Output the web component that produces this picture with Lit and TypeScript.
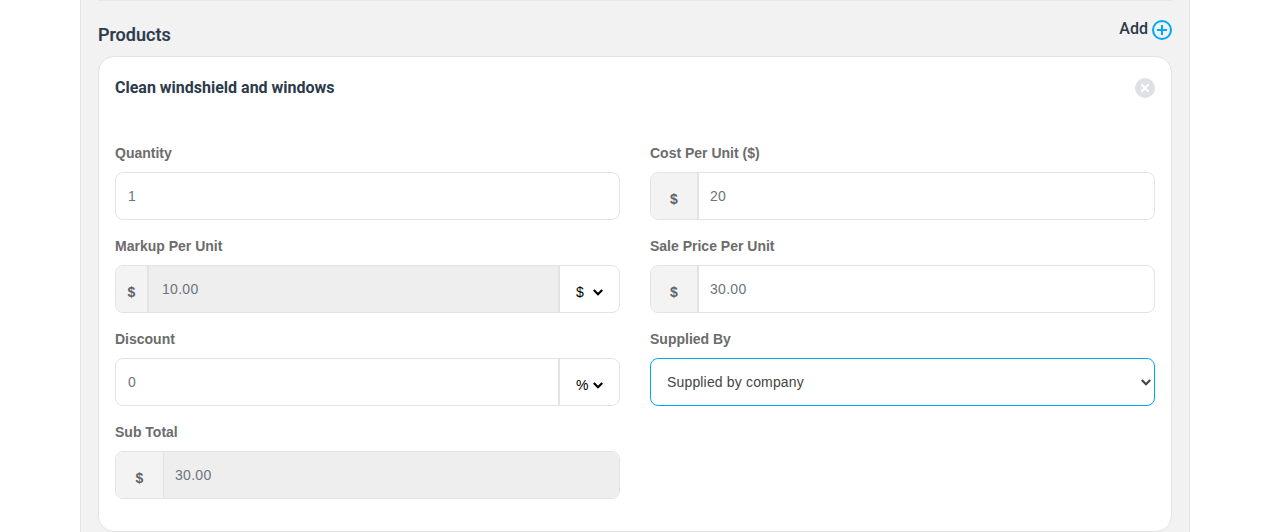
import { LitElement, html, css, svg } from "lit";
import { customElement } from "lit/decorators.js";

const chevron = (color = "#000") => html`<svg class="chev" width="12" height="12" viewBox="0 0 12 12" aria-hidden="true">${svg`<path d="M1.8 4l4.2 4.2L10.2 4" fill="none" stroke=${color} stroke-width="2.2"/>`}</svg>`;

@customElement("app-root")
export class AppRoot extends LitElement {
  static styles = css`
    :host { display: block; height: 532px; overflow: hidden; background: #fff; font-family: "Liberation Sans", Arial, sans-serif; }
    * { box-sizing: border-box; }
    .panel { width: 1110px; height: 532px; margin-left: 80px; background: #f2f2f2; border-left: 1px solid #e3e3e3; border-right: 1px solid #e3e3e3; padding: 0 17px; }
    .rule { height: 1px; background: #e5e7eb; }
    .head { display: flex; justify-content: space-between; height: 55px; }
    .title { font: 500 18px/22px Roboto, sans-serif; color: #2c3a4b; margin: 0; padding-top: 23px; -webkit-text-stroke: 0.2px #2c3a4b; }
    .add { display: flex; align-items: flex-start; gap: 3px; font: 500 16px/20px Roboto, sans-serif; color: #2c3a4b; padding-top: 18px; }
    .add svg { margin-top: 1px; }
    .card { background: #fff; border: 1px solid #e3e3e3; border-radius: 16px; height: 476px; padding: 0 16px; }
    .card-head { display: flex; justify-content: space-between; align-items: center; height: 61px; padding-top: 1px; }
    .card-title { font: 700 16px/20px Roboto, sans-serif; color: #2c3a4b; margin: 0; }
    .grid { display: grid; grid-template-columns: 505px 505px; column-gap: 30px; row-gap: 0; padding-top: 25px; }
    .field { height: 93px; }
    label { display: block; font: 700 14px/20px "Liberation Sans", Arial, sans-serif; color: #6c6c6c; height: 20px; margin-bottom: 9px; }
    .group { display: flex; height: 48px; border: 1px solid #e3e3e3; border-radius: 8px; overflow: hidden; background: #fff; }
    .addon { flex: none; display: flex; align-items: center; justify-content: center; background: #f3f3f3; border-right: 2px solid #e3e3e3; font: 700 14px "Liberation Sans", Arial, sans-serif; color: #5f6368; padding-top: 6px; }
    .w33 { width: 33px; }
    .w48 { width: 48px; }
    .thin { border-right-width: 1px; }
    .value { flex: 1; min-width: 0; padding: 0 11px; font: 14px/46px "Liberation Sans", Arial, sans-serif; letter-spacing: 0.3px; color: #6c757d; }
    .value.plain { padding-left: 12px; }
    .value.off { background: #eee; padding-left: 13px; }
    .value.off.tight { padding-left: 11px; }
    .unit { flex: none; width: 61px; border-left: 2px solid #e3e3e3; display: flex; align-items: center; padding: 6px 0 0 16px; font: 14px "Liberation Sans", Arial, sans-serif; color: #000; }
    .unit span { width: 16px; }
    .chev { flex: none; }
    .select { height: 48px; border: 1px solid #00a8f5; border-radius: 8px; display: flex; align-items: center; justify-content: space-between; padding: 0 2px 0 16px; font: 14px "Liberation Sans", Arial, sans-serif; letter-spacing: 0.16px; color: #444; }
  `;

  render() {
    return html`<div class="panel">
      <div class="rule"></div>
      <div class="head">
        <h2 class="title">Products</h2>
        <div class="add">Add
          <svg width="21" height="21" viewBox="0 0 21 21" aria-hidden="true">
            <circle cx="11" cy="10" r="9" fill="none" stroke="#00a8f5" stroke-width="2"/>
            <path d="M11 5v10M6 10h10" stroke="#00a8f5" stroke-width="2"/>
          </svg>
        </div>
      </div>
      <section class="card">
        <div class="card-head">
          <h3 class="card-title">Clean windshield and windows</h3>
          <svg width="20" height="20" viewBox="0 0 20 20" aria-hidden="true">
            <circle cx="10" cy="10" r="10" fill="#dfe0e3"/>
            <path d="M6.3 6.3l7.4 7.4M13.7 6.3l-7.4 7.4" stroke="#fff" stroke-width="2.2"/>
          </svg>
        </div>
        <div class="grid">
          <div class="field"><label>Quantity</label>
            <div class="group"><div class="value plain">1</div></div></div>
          <div class="field"><label>Cost Per Unit ($)</label>
            <div class="group"><div class="addon w48">$</div><div class="value">20</div></div></div>
          <div class="field"><label>Markup Per Unit</label>
            <div class="group"><div class="addon w33">$</div><div class="value off">10.00</div>
              <div class="unit"><span>$</span>${chevron()}</div></div></div>
          <div class="field"><label>Sale Price Per Unit</label>
            <div class="group"><div class="addon w48">$</div><div class="value">30.00</div></div></div>
          <div class="field"><label>Discount</label>
            <div class="group"><div class="value plain">0</div>
              <div class="unit"><span>%</span>${chevron()}</div></div></div>
          <div class="field"><label>Supplied By</label>
            <div class="select">Supplied by company ${chevron("#444")}</div></div>
          <div class="field"><label>Sub Total</label>
            <div class="group"><div class="addon w48 thin">$</div><div class="value off tight">30.00</div></div></div>
        </div>
      </section>
    </div>`;
  }
}
